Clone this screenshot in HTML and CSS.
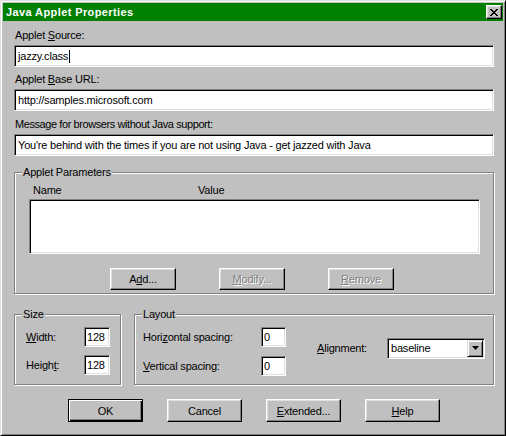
FILE: index.html
```html
<!DOCTYPE html>
<html>
<head>
<meta charset="utf-8">
<link rel="stylesheet" href="styles.css">
</head>
<body>
<div class="window">
  <div class="titlebar">
    <span class="title">Java Applet Properties</span>
    <span class="close"><svg width="8" height="7" viewBox="0 0 8 7"><path d="M0 0h2v1h1v1h2V1h1V0h2v1H7v1H6v1H5v1h1v1h1v1h1v1H6V6H5V5H3v1H2v1H0V6h1V5h1V4h1V3H2V2H1V1H0z" fill="#000"/></svg></span>
  </div>
  <div class="content">
    <div class="field f1">
      <div class="label">Applet <u>S</u>ource:</div>
      <div class="input">jazzy.class<span class="caret"></span></div>
    </div>
    <div class="field f2">
      <div class="label">Applet <u>B</u>ase URL:</div>
      <div class="input">http://samples.microsoft.com</div>
    </div>
    <div class="field f3">
      <div class="label">Messa<u>g</u>e for browsers without Java support:</div>
      <div class="input">You're behind with the times if you are not using Java - get jazzed with Java</div>
    </div>

    <div class="group params">
      <span class="group-title">Applet Parameters</span>
      <div class="list-head"><span class="col-name">Name</span><span class="col-value">Value</span></div>
      <div class="listbox"></div>
      <div class="param-buttons">
        <div class="btn small">A<u>d</u>d...</div>
        <div class="btn small disabled"><u>M</u>odify...</div>
        <div class="btn small disabled"><u>R</u>emove</div>
      </div>
    </div>

    <div class="lower">
      <div class="group size">
        <span class="group-title">Size</span>
        <div class="size-row"><span class="lbl"><u>W</u>idth:</span><div class="input num">128</div></div>
        <div class="size-row"><span class="lbl">Heigh<u>t</u>:</span><div class="input num">128</div></div>
      </div>
      <div class="group layout">
        <span class="group-title">Layout</span>
        <div class="spacing">
          <div class="sp-row"><span class="lbl">Hori<u>z</u>ontal spacing:</span><div class="input num small-num">0</div></div>
          <div class="sp-row"><span class="lbl"><u>V</u>ertical spacing:</span><div class="input num small-num">0</div></div>
        </div>
        <div class="align">
          <span class="lbl"><u>A</u>lignment:</span>
          <div class="select">
            <span class="sel-text">baseline</span>
            <span class="drop"><svg width="7" height="4" viewBox="0 0 7 4"><path d="M0 0h7L3.5 4z" fill="#000"/></svg></span>
          </div>
        </div>
      </div>
    </div>

    <div class="bottom-buttons">
      <div class="btn big default">OK</div>
      <div class="btn big">Cancel</div>
      <div class="btn big"><u>E</u>xtended...</div>
      <div class="btn big"><u>H</u>elp</div>
    </div>
  </div>
</div>
</body>
</html>
```

FILE: styles.css
```css
* { box-sizing: border-box; }
html, body { margin: 0; padding: 0; background: #c0c0c0; }
body {
  font-family: "Liberation Sans", Arial, sans-serif;
  font-size: 11px;
  letter-spacing: -0.2px;
  color: #000;
}
u { text-decoration: underline; text-underline-offset: 1px; }

.window {
  width: 506px;
  height: 436px;
  background: #c0c0c0;
  border: 1px solid;
  border-color: #dfdfdf #000 #000 #dfdfdf;
  box-shadow: inset 1px 1px #fff, inset -1px -1px #808080;
  padding: 2px;
  display: flex;
  flex-direction: column;
}

.titlebar {
  height: 18px;
  background: #008000;
  display: flex;
  align-items: center;
  justify-content: space-between;
  padding-left: 3px;
  padding-right: 1px;
}
.title {
  color: #fff;
  font-weight: bold;
  font-size: 11px;
  letter-spacing: 0.4px;
}
.close {
  width: 16px;
  height: 14px;
  background: #c0c0c0;
  border: 1px solid;
  border-color: #fff #000 #000 #fff;
  box-shadow: inset -1px -1px #808080, inset 1px 1px #dfdfdf;
  display: flex;
  align-items: center;
  justify-content: center;
}

.content {
  flex: 1;
  padding: 8px 9px 0 11px;
  display: flex;
  flex-direction: column;
}

.label {
  height: 13px;
  line-height: 13px;
  margin-bottom: 3px;
  padding-left: 1px;
}
.field.f2 { margin-top: 6px; }
.field.f3 { margin-top: 7px; }
.field.f3 .label { letter-spacing: -0.42px; }

.input {
  height: 22px;
  background: #fff;
  border: 1px solid;
  border-color: #808080 #fff #fff #808080;
  box-shadow: inset 1px 1px #000, inset -1px -1px #dfdfdf;
  padding: 0 3px;
  display: flex;
  align-items: center;
  white-space: nowrap;
}
.caret {
  display: inline-block;
  width: 1px;
  height: 13px;
  background: #000;
  margin-left: 1px;
}

.group {
  position: relative;
  border: 1px solid #808080;
  box-shadow: inset 1px 1px #fff, 1px 1px #fff;
}
.group-title {
  position: absolute;
  top: -7px;
  left: 7px;
  background: #c0c0c0;
  padding: 0 1px 0 1px;
  line-height: 13px;
}

.params {
  margin-top: 16px;
  height: 122px;
  padding: 11px 13px 0 14px;
}
.list-head {
  height: 13px;
  line-height: 13px;
  display: flex;
  margin-bottom: 2px;
}
.col-name { width: 169px; padding-left: 4px; }
.listbox {
  height: 55px;
  background: #fff;
  border: 1px solid;
  border-color: #808080 #fff #fff #808080;
  box-shadow: inset 1px 1px #000, inset -1px -1px #dfdfdf;
}
.param-buttons {
  margin-top: 14px;
  display: flex;
  gap: 43px;
  padding-left: 81px;
}

.btn {
  background: #c0c0c0;
  border: 1px solid;
  border-color: #fff #000 #000 #fff;
  box-shadow: inset -1px -1px #808080, inset 1px 1px #dfdfdf;
  display: flex;
  align-items: center;
  justify-content: center;
  white-space: nowrap;
}
.btn.small { width: 66px; height: 22px; }
.btn.big { width: 75px; height: 23px; }
.btn.default {
  border: 1px solid #000;
  box-shadow: inset 1px 1px #fff, inset -1px -1px #000, inset -2px -2px #808080;
}
.btn.disabled {
  color: #808080;
  text-shadow: 1px 1px 0 #fff;
}

.lower {
  margin-top: 20px;
  display: flex;
  gap: 13px;
}
.size {
  width: 107px;
  height: 71px;
  padding: 12px 10px 0 11px;
  display: flex;
  flex-direction: column;
  gap: 8px;
}
.size-row {
  display: flex;
  align-items: center;
  justify-content: space-between;
}
.input.num {
  width: 26px;
  height: 20px;
  padding: 0 2px;
}
.input.small-num { width: 25px; }

.layout {
  width: 360px;
  height: 71px;
  display: flex;
  padding: 12px 0 0 8px;
}
.spacing {
  display: flex;
  flex-direction: column;
  gap: 9px;
}
.sp-row {
  display: flex;
  align-items: center;
}
.sp-row .lbl { width: 118px; }
.align {
  display: flex;
  align-items: center;
  margin-left: 31px;
  height: 40px;
  margin-top: 1px;
}
.align .lbl { width: 70px; }
.select {
  width: 98px;
  height: 21px;
  background: #fff;
  border: 1px solid;
  border-color: #808080 #fff #fff #808080;
  box-shadow: inset 1px 1px #000, inset -1px -1px #dfdfdf;
  display: flex;
  align-items: center;
  justify-content: space-between;
  padding: 2px 2px 2px 3px;
}
.drop {
  width: 16px;
  height: 17px;
  margin-right: -1px;
  background: #c0c0c0;
  border: 1px solid;
  border-color: #dfdfdf #000 #000 #dfdfdf;
  box-shadow: inset 1px 1px #fff, inset -1px -1px #808080;
  display: flex;
  align-items: center;
  justify-content: center;
}

.bottom-buttons {
  margin-top: 14px;
  display: flex;
  gap: 24px;
  padding-left: 54px;
}
```
